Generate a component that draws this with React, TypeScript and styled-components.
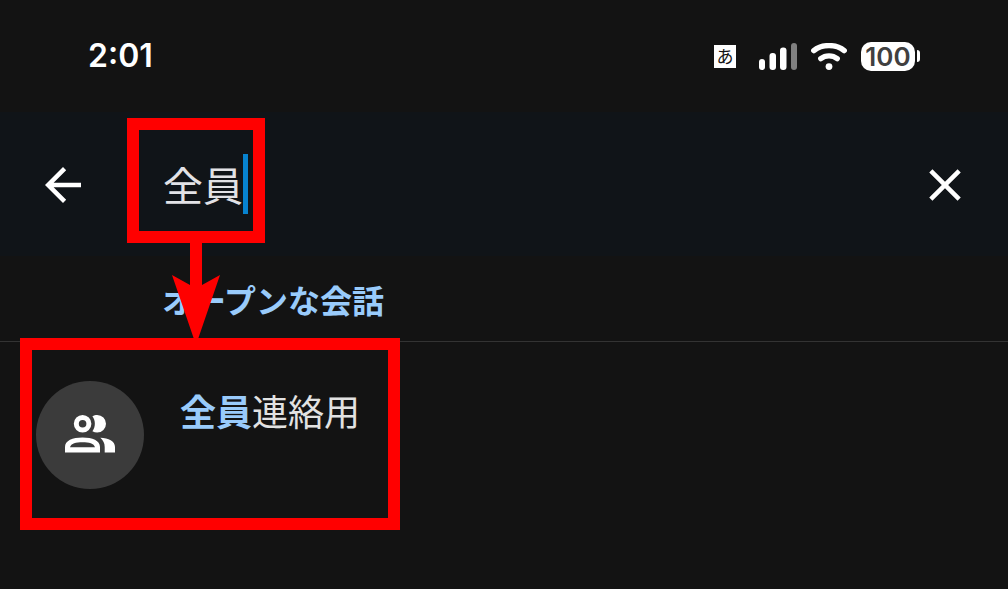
import React, { useState } from "react";
import styled, { createGlobalStyle } from "styled-components";

const GlobalStyle = createGlobalStyle`
  * { box-sizing: border-box; }
  body {
    margin: 0;
    background: #131313;
    color: #e2e2e6;
    font-family: "Noto Sans CJK JP", sans-serif;
  }
`;

const Screen = styled.div`
  min-height: 100vh;
  background: #131313;
`;

const StatusBar = styled.header`
  display: flex;
  align-items: center;
  justify-content: space-between;
  height: 112px;
  padding: 0 88px;
`;

const Clock = styled.time`
  color: #fff;
  font: 600 32px/40px Inter, sans-serif;
`;

const StatusIcons = styled.div`
  display: flex;
  align-items: center;
  gap: 14px;
`;

const InputMode = styled.span`
  display: flex;
  align-items: center;
  justify-content: center;
  width: 22px;
  height: 23px;
  margin-right: 9px;
  background: #fff;
  color: #131313;
  font-size: 17px;
  line-height: 22px;
`;

const Battery = styled.div`
  display: flex;
  align-items: center;
  gap: 2px;
`;

const BatteryBody = styled.span`
  width: 54px;
  height: 29px;
  border-radius: 10px;
  background: #fff;
  color: #404040;
  font: 600 26px/29px Inter, sans-serif;
  text-align: center;
`;

const BatteryTip = styled.span`
  width: 3px;
  height: 12px;
  border-radius: 0 3px 3px 0;
  background: #fff;
`;

const SearchBar = styled.form`
  display: flex;
  align-items: center;
  height: 144px;
  padding: 2px 36px 0;
  background: #101418;
`;

const IconButton = styled.button`
  display: flex;
  padding: 0;
  border: 0;
  background: none;
  color: #fff;
  cursor: pointer;
`;

const SearchArea = styled.div`
  flex: 1;
  padding: 0 0 9px 37px;
`;

const Field = styled.div`
  position: relative;
  display: flex;
  align-items: center;
  width: max-content;
  padding: 24px 5px 17px 24px;
  margin: 0 12px;
`;

const SearchInput = styled.input`
  height: 60px;
  padding: 0;
  border: 0;
  outline: 0;
  background: none;
  color: #e2e2e6;
  caret-color: transparent;
  font: 400 40px/60px "Noto Sans CJK JP", sans-serif;
`;

const Caret = styled.span`
  width: 5px;
  height: 60px;
  background: #0783cf;
`;

const Frame = styled.span<{ $spread: number }>`
  position: absolute;
  inset: ${(p) => -p.$spread}px;
  border: 12px solid #f00;
  pointer-events: none;
`;

const Pointer = styled.svg`
  position: absolute;
  top: 100%;
  left: 50%;
  z-index: 1;
  transform: translateX(-50%);
  margin-top: 8px;
  pointer-events: none;
`;

const SectionTitle = styled.h2`
  margin: 0;
  padding: 19px 36px 18px 162px;
  border-bottom: 1px solid #333;
  color: #99cbfb;
  font-size: 32px;
  font-weight: 700;
  line-height: 48px;
`;

const Results = styled.ul`
  margin: 0;
  padding: 8px 32px;
  list-style: none;
`;

const Result = styled.li`
  position: relative;
  width: max-content;
`;

const ResultLink = styled.a`
  display: flex;
  gap: 36px;
  width: 356px;
  height: 168px;
  padding: 31px 4px;
  color: #e2e2e2;
  text-decoration: none;
`;

const Avatar = styled.span`
  display: flex;
  align-items: center;
  justify-content: center;
  width: 108px;
  height: 108px;
  padding-bottom: 2px;
  border-radius: 50%;
  background: #3b3b3b;
`;

const Name = styled.span`
  padding-top: 2px;
  font-size: 36px;
  line-height: 54px;
`;

const Match = styled.b`
  color: #99cbfb;
`;

const SignalIcon = () => (
  <svg width="38" height="27" viewBox="0 0 38 27" fill="#fff" aria-hidden="true">
    <rect x="0" y="16" width="6" height="11" rx="3" />
    <rect x="10.5" y="10" width="6.5" height="17" rx="3" />
    <rect x="21" y="4.5" width="6.5" height="22.5" rx="3" />
    <rect x="32" y="0" width="6" height="27" rx="3" fill="#808080" />
  </svg>
);

const WifiIcon = () => (
  <svg width="36" height="27" viewBox="0 0 36 27" fill="none" stroke="#fff" strokeLinecap="round" aria-hidden="true">
    <path d="M2.8 7.6C11 .9 25 .9 33.2 7.6" strokeWidth="5.4" />
    <path d="M9.8 15.6C14.5 11.9 21.500 11.9 26.2 15.6" strokeWidth="5.4" />
    <circle cx="18" cy="23.6" r="3.4" fill="#fff" stroke="none" />
  </svg>
);

const BackIcon = () => (
  <svg width="54" height="54" viewBox="0 0 24 24" fill="currentColor" aria-hidden="true">
    <path d="M20 11H7.83l5.59-5.59L12 4l-8 8 8 8 1.41-1.41L7.83 13H20v-2z" />
  </svg>
);

const ClearIcon = () => (
  <svg width="54" height="54" viewBox="0 0 24 24" fill="currentColor" aria-hidden="true">
    <path d="M19 6.41 17.59 5 12 10.59 6.41 5 5 6.41 10.59 12 5 17.59 6.41 19 12 13.41 17.59 19 19 17.59 13.41 12z" />
  </svg>
);

const GroupIcon = () => (
  <svg width="50" height="38" viewBox="0 0 50 38" fill="#fff" aria-hidden="true">
    <circle cx="17.6" cy="8.8" r="6.3" fill="none" stroke="#fff" strokeWidth="5" />
    <path d="M27.4 1.3C29 .4 30.5 0 32.2 0a8.8 8.8 0 0 1 0 17.6c-1.7 0-3.3-.4-4.8-1.3 3.3-4.5 3.3-10.5 0-15z" />
    <path
      fillRule="evenodd"
      d="M0 37.5V32C0 25.5 7.5 22.400 17.5 22.4S35 25.5 35 32v5.500zM5 32.2h25c-1-3.6-6-4.9-12.500-4.9S6 28.6 5 32.200z"
    />
    <path d="M35.3 22.700C43.500 23 50 26 50 32v5.500H39.700V32c0-3.800-1.500-6.800-4.400-9.300z" />
  </svg>
);

export default function App() {
  const [query, setQuery] = useState("全員");

  return (
    <Screen>
      <GlobalStyle />
      <StatusBar>
        <Clock>2:01</Clock>
        <StatusIcons>
          <InputMode>あ</InputMode>
          <SignalIcon />
          <WifiIcon />
          <Battery>
            <BatteryBody>100</BatteryBody>
            <BatteryTip />
          </Battery>
        </StatusIcons>
      </StatusBar>

      <SearchBar role="search" onSubmit={(e) => e.preventDefault()}>
        <IconButton type="button" aria-label="戻る">
          <BackIcon />
        </IconButton>
        <SearchArea>
          <Field>
            <SearchInput
              aria-label="検索"
              value={query}
              onChange={(e) => setQuery(e.target.value)}
              style={{ width: `${Math.max(query.length, 1)}em` }}
            />
            <Caret />
            <Frame $spread={12} />
            <Pointer width="48" height="106" viewBox="0 0 48 106" fill="#f00" aria-hidden="true">
              <path d="M18 0h12v46l18-10-24 70L0 36l18 10z" />
            </Pointer>
          </Field>
        </SearchArea>
        <IconButton type="button" aria-label="クリア" onClick={() => setQuery("")}>
          <ClearIcon />
        </IconButton>
      </SearchBar>

      <SectionTitle>オープンな会話</SectionTitle>
      <Results>
        <Result>
          <ResultLink href="#all">
            <Avatar>
              <GroupIcon />
            </Avatar>
            <Name>
              <Match>全員</Match>連絡用
            </Name>
          </ResultLink>
          <Frame $spread={12} />
        </Result>
      </Results>
    </Screen>
  );
}
